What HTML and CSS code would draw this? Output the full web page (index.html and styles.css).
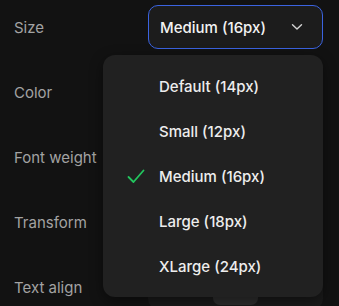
FILE: index.html
```html
<!DOCTYPE html>
<html>
<head>
<meta charset="utf-8">
<link rel="stylesheet" href="styles.css">
</head>
<body>
<div class="panel">
  <div class="row">
    <span class="label">Size</span>
    <div class="select">
      <span class="select-value">Medium (16px)</span>
      <svg class="chevron" width="12" height="8" viewBox="0 0 12 8"><path d="M1.5 1.8 L6 6 L10.5 1.8" fill="none" stroke="#d4d4d4" stroke-width="1.4" stroke-linecap="round" stroke-linejoin="round"/></svg>
    </div>
  </div>
  <div class="row">
    <span class="label">Color</span>
    <div class="control"></div>
  </div>
  <div class="row">
    <span class="label">Font weight</span>
    <div class="control"></div>
  </div>
  <div class="row">
    <span class="label">Transform</span>
    <div class="control"></div>
  </div>
  <div class="row">
    <span class="label">Text align</span>
    <div class="control segmented"><span class="seg"></span><span class="seg active"></span><span class="seg"></span></div>
  </div>

  <ul class="menu">
    <li class="item"><span class="check"></span>Default (14px)</li>
    <li class="item"><span class="check"></span>Small (12px)</li>
    <li class="item selected"><span class="check"><svg width="18" height="15" viewBox="0 0 18 15"><path d="M1.5 8 L6.5 13 L16.5 1.5" fill="none" stroke="#22c55e" stroke-width="1.8" stroke-linecap="round" stroke-linejoin="round"/></svg></span>Medium (16px)</li>
    <li class="item"><span class="check"></span>Large (18px)</li>
    <li class="item"><span class="check"></span>XLarge (24px)</li>
  </ul>
</div>
</body>
</html>
```
FILE: styles.css
```css
html, body {
  margin: 0;
  padding: 0;
  background: #121212;
  font-family: Inter, "Noto Sans", sans-serif;
  overflow: hidden;
}
.panel {
  position: relative;
  width: 339px;
  height: 306px;
  padding: 5px 16px 0 14px;
  box-sizing: border-box;
  display: flex;
  flex-direction: column;
  gap: 21px;
}
.row {
  display: flex;
  align-items: center;
  justify-content: space-between;
  height: 44px;
  flex: none;
}
.label {
  color: #a3a3a3;
  font-size: 15px;
}
.select, .control {
  width: 175px;
  height: 44px;
  box-sizing: border-box;
  border-radius: 10px;
}
.select {
  border: 1px solid #3b63e0;
  background: #1c1c1c;
  display: flex;
  align-items: center;
  justify-content: space-between;
  padding: 0 19px 0 11px;
}
.select-value {
  color: #f2f2f2;
  font-size: 15px;
  font-weight: 500;
}
.control {
  background: #1a1a1a;
}
.segmented {
  display: flex;
  gap: 10px;
  padding: 4px 10px;
  justify-content: center;
}
.seg {
  width: 52px;
  border-radius: 7px;
}
.seg.active {
  background: #2e2e2e;
}
.menu {
  position: absolute;
  left: 103px;
  top: 55px;
  width: 220px;
  margin: 0;
  padding: 9px 0 8px;
  list-style: none;
  background: #212121;
  border-radius: 12px;
  box-shadow: 0 4px 14px rgba(0,0,0,0.45);
}
.item {
  height: 45px;
  display: flex;
  align-items: center;
  color: #ededed;
  font-size: 15px;
  font-weight: 500;
}
.check {
  width: 56px;
  padding-left: 24px;
  box-sizing: border-box;
  display: flex;
  align-items: center;
  flex: none;
}
```
